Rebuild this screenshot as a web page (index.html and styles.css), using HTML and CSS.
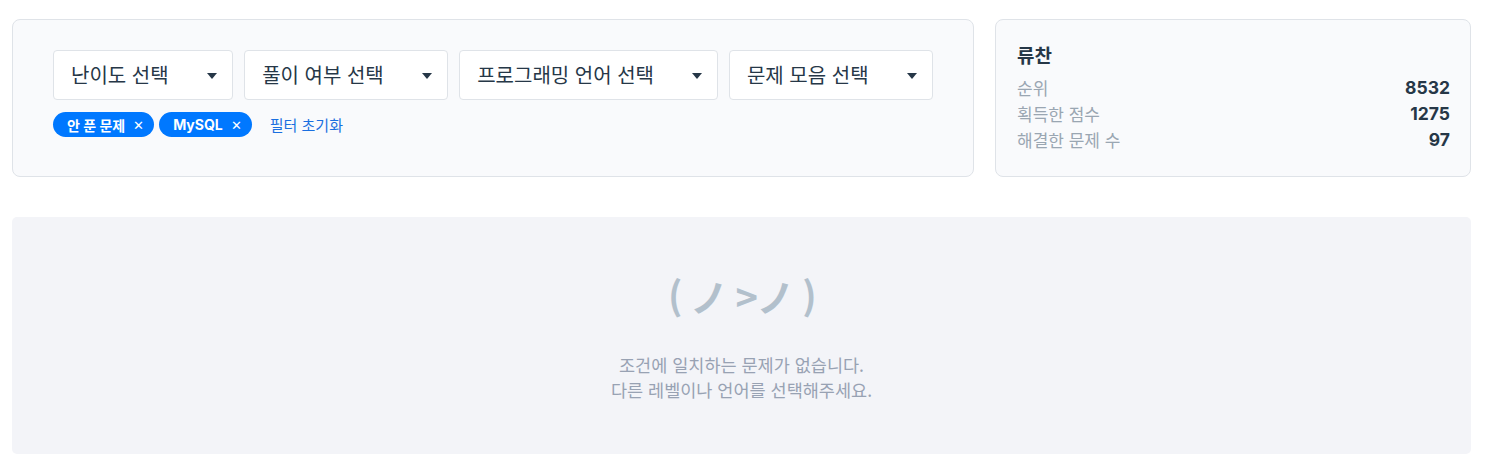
FILE: index.html
```html
<!DOCTYPE html>
<html lang="ko">
<head>
<meta charset="utf-8">
<link rel="stylesheet" href="styles.css">
</head>
<body>
<div class="page">
  <div class="top">
    <section class="filter-card">
      <div class="selects">
        <div class="select s1"><span>난이도 선택</span><span class="caret"></span></div>
        <div class="select s2"><span>풀이 여부 선택</span><span class="caret"></span></div>
        <div class="select s3"><span>프로그래밍 언어 선택</span><span class="caret"></span></div>
        <div class="select s4"><span>문제 모음 선택</span><span class="caret"></span></div>
      </div>
      <div class="tags">
        <span class="tag">안 푼 문제 <span class="x">✕</span></span>
        <span class="tag">MySQL <span class="x">✕</span></span>
        <a class="reset">필터 초기화</a>
      </div>
    </section>
    <section class="profile-card">
      <div class="name">류찬</div>
      <div class="row"><span class="label">순위</span><span class="value">8532</span></div>
      <div class="row"><span class="label">획득한 점수</span><span class="value">1275</span></div>
      <div class="row"><span class="label">해결한 문제 수</span><span class="value">97</span></div>
    </section>
  </div>
  <section class="empty">
    <div class="kaomoji">( ノ &gt;ノ )</div>
    <p class="msg">조건에 일치하는 문제가 없습니다.<br>다른 레벨이나 언어를 선택해주세요.</p>
  </section>
</div>
</body>
</html>
```
FILE: styles.css
```css
* { box-sizing: border-box; }
body {
  margin: 0;
  background: #ffffff;
  font-family: "Inter", "Noto Sans CJK KR", sans-serif;
  color: #263747;
}
.page {
  padding: 19px 16px 0 12px;
}
.top {
  display: flex;
  gap: 21px;
}
.filter-card {
  width: 962px;
  height: 158px;
  background: #f9fafc;
  border: 1px solid #dfe3e8;
  border-radius: 8px;
  padding: 30px 40px;
}
.selects {
  display: flex;
  gap: 11px;
}
.select {
  height: 50px;
  background: #fff;
  border: 1px solid #dfe3e8;
  border-radius: 4px;
  display: flex;
  align-items: center;
  justify-content: space-between;
  padding: 0 15px 2px 17px;
  font-family: "Noto Sans CJK KR", sans-serif;
  font-size: 20px;
  color: #263747;
}
.s1 { width: 181px; }
.s2 { width: 205px; }
.s3 { width: 260px; }
.s4 { width: 205px; }
.caret {
  width: 0;
  height: 0;
  border-left: 5.5px solid transparent;
  border-right: 5.5px solid transparent;
  border-top: 6px solid #263747;
  margin-top: 4px;
}
.tags {
  display: flex;
  align-items: center;
  margin-top: 12px;
  gap: 5px;
}
.tag {
  height: 25px;
  border-radius: 13px;
  background: #0078ff;
  color: #fff;
  font-size: 14px;
  font-weight: 700;
  display: inline-flex;
  align-items: center;
  padding: 0 10px 0 14px;
  font-family: "Inter", "Noto Sans CJK KR", sans-serif;
}
.tag .x {
  font-weight: 400;
  font-size: 13px;
  margin-left: 8px;
}
.reset {
  margin-left: 13px;
  font-size: 15px;
  color: #1a6fe0;
  font-family: "Noto Sans CJK KR", sans-serif;
}
.profile-card {
  width: 477px;
  height: 158px;
  background: #f9fafc;
  border: 1px solid #dfe3e8;
  border-radius: 8px;
  padding: 22px 20px 0 21px;
}
.name {
  font-family: "Noto Sans CJK KR", sans-serif;
  font-weight: 700;
  font-size: 19px;
  line-height: 26px;
  color: #263747;
  margin-bottom: 6px;
}
.row {
  display: flex;
  justify-content: space-between;
  align-items: center;
  height: 26px;
}
.label {
  font-family: "Noto Sans CJK KR", sans-serif;
  font-size: 17px;
  color: #9aa6b2;
}
.value {
  font-family: "Inter", sans-serif;
  font-weight: 700;
  font-size: 17.5px;
  color: #263747;
}
.empty {
  margin-top: 40px;
  height: 237px;
  background: #f3f4f8;
  border-radius: 5px;
  display: flex;
  flex-direction: column;
  align-items: center;
  padding-top: 53px;
}
.kaomoji {
  font-family: "Noto Sans CJK KR", sans-serif;
  font-weight: 700;
  font-size: 38px;
  letter-spacing: -1.5px;
  line-height: 52px;
  color: #b2c0cc;
  white-space: pre;
}
.msg {
  margin: 30px 0 0;
  text-align: center;
  font-family: "Noto Sans CJK KR", sans-serif;
  font-size: 17.5px;
  line-height: 25px;
  color: #98a2b3;
}
```
